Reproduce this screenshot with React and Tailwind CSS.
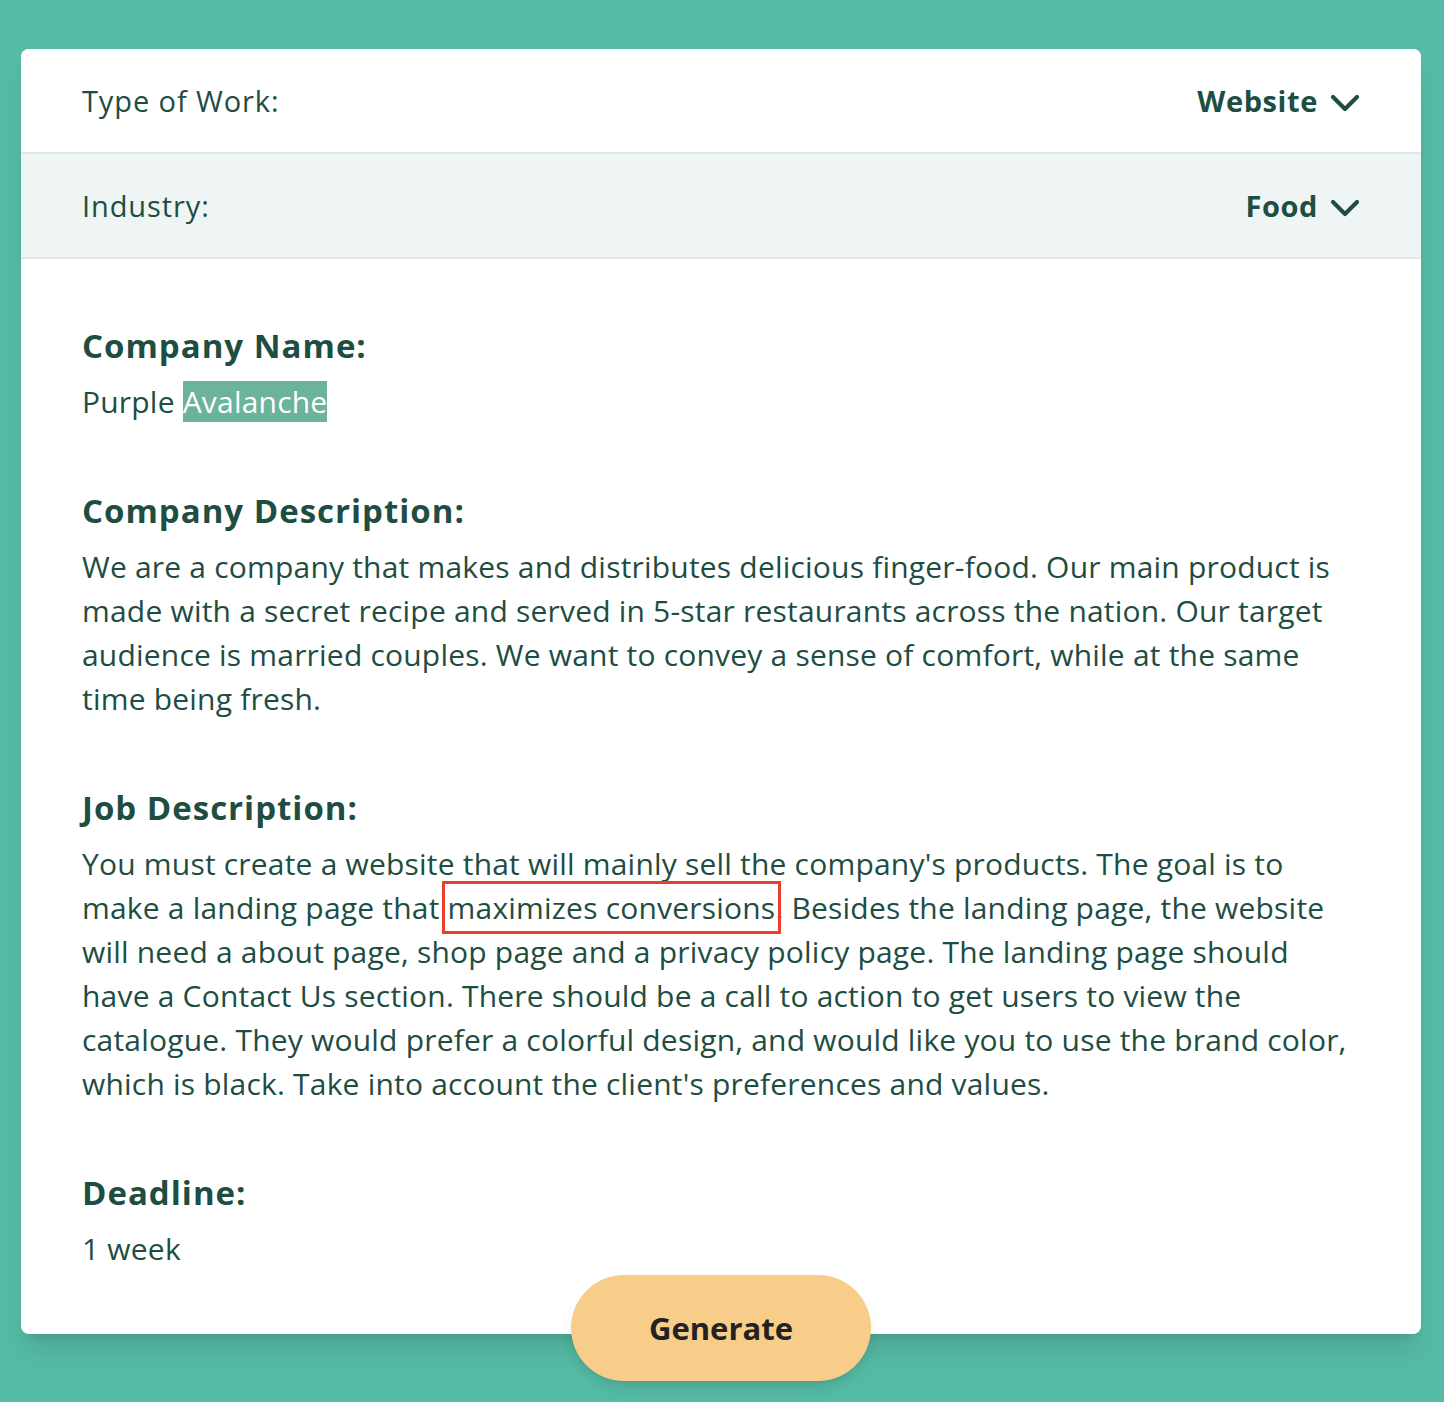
const font = { fontFamily: '"Open Sans", "Noto Sans", sans-serif' }

function Chevron() {
    return (
        <svg width="30" height="20" viewBox="0 0 30 20" fill="none" className="mt-1">
            <polyline points="3,4 15,16 27,4" stroke="currentColor" strokeWidth="4.2" strokeLinecap="round" strokeLinejoin="round" />
        </svg>
    )
}

function SelectRow({ label, value, shaded }) {
    return (
        <div
            className={
                'flex items-center justify-between h-[105px] px-[61px] border-b-2 border-[#e1e8e8] ' +
                (shaded ? 'bg-[#eff5f5]' : 'bg-white')
            }
        >
            <span className="text-[29px] tracking-[0.9px] text-[#1e4d42]">{label}</span>
            <button className="flex items-center gap-3 text-[29px] tracking-[0.6px] font-bold text-[#1e4d42]">
                {value}
                <Chevron />
            </button>
        </div>
    )
}

function Field({ title, children }) {
    return (
        <div>
            <h2 className="text-[33px] tracking-[1px] font-bold text-[#1e4d42] leading-[44px]">{title}</h2>
            <div className="mt-3 text-[30px] tracking-[0.2px] leading-[44px] text-[#1e4d42]">{children}</div>
        </div>
    )
}

export default function App() {
    return (
        <div className="min-h-[1402px] bg-[#55bba6] pl-[21px] pt-[49px]" style={font}>
            <div className="w-[1400px] flex flex-col items-center">
                <div className="w-full bg-white rounded-lg shadow-xl overflow-hidden">
                    <SelectRow label="Type of Work:" value="Website" />
                    <SelectRow label="Industry:" value="Food" shaded />

                    <div className="px-[61px] pt-[65px] pb-[63px] flex flex-col gap-[65px]">
                        <Field title="Company Name:">
                            Purple <span className="bg-[#6bb39b] text-white">Avalanche</span>
                        </Field>

                        <Field title="Company Description:">
                            We are a company that makes and distributes delicious finger-food. Our main product is
                            made with a secret recipe and served in 5-star restaurants across the nation. Our target
                            audience is married couples. We want to convey a sense of comfort, while at the same
                            time being fresh.
                        </Field>

                        <Field title="Job Description:">
                            You must create a website that will mainly sell the company's products. The goal is to
                            make a landing page that{' '}
                            <span className="outline-[3px] outline-solid outline-[#e8402a] outline-offset-[3px]">maximizes conversions</span>.
                            Besides the landing page, the website will need a about page, shop page and a privacy
                            policy page. The landing page should have a Contact Us section. There should be a call to
                            action to get users to view the catalogue. They would prefer a colorful design, and would
                            like you to use the brand color, which is black. Take into account the client's
                            preferences and values.
                        </Field>

                        <Field title="Deadline:">1 week</Field>
                    </div>
                </div>

                <button className="-mt-[59px] w-[300px] h-[106px] rounded-full bg-[#f8cd8a] text-[31px] font-bold text-[#222] shadow-lg">
                    Generate
                </button>
            </div>
        </div>
    )
}
